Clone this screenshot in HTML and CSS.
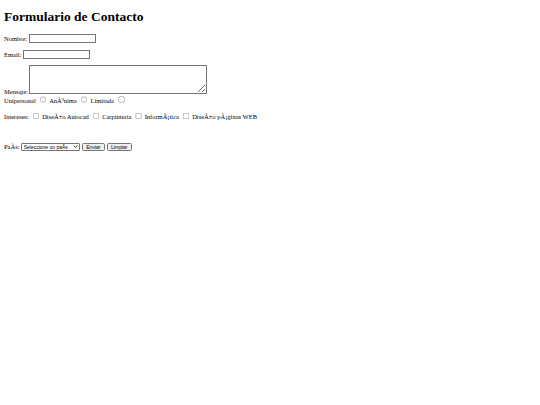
FILE: index.html
```html
<!DOCTYPE html>
<html>
<head>
<meta charset="utf-8">
<title>Formulario de Contacto</title>
<link rel="stylesheet" href="styles.css">
</head>
<body class="page">
<h2 class="title">Formulario de Contacto</h2>
<form class="form">
<p class="row">Nombre: <input type="text" class="field"></p>
<p class="row">Email: <input type="text" class="field"></p>
<p class="row">Mensaje: <textarea class="msg"></textarea><br>
Unipersonal <input type="radio" name="t" class="opt"> AnÃ³nima <input type="radio" name="t" class="opt"> Limitada <input type="radio" name="t" class="opt"></p>
<p class="row row-interests">Intereses: <input type="checkbox" class="opt"> DiseÃ±o Autocad <input type="checkbox" class="opt"> Carpinteria <input type="checkbox" class="opt"> InformÃ¡tica <input type="checkbox" class="opt"> DiseÃ±o pÃ¡ginas WEB</p>
<br>
<p class="row row-country">PaÃ­s: <select class="sel"><option>Seleccione un paÃ­s</option></select> <input type="submit" value="Enviar" class="btn"> <input type="reset" value="Limpiar" class="btn"></p>
</form>
</body>
</html>
```

FILE: styles.css
```css
.page {
  zoom: 0.5;
  margin: 8px;
  font-family: "Liberation Serif", "Times New Roman", serif;
  font-size: 13px;
  background: #fff;
  color: #000;
}
.title {
  font-size: 27px;
  font-weight: bold;
  margin: 10px 0 18px;
}
.row {
  margin: 13px 0;
}
.row-interests {
  margin-top: 15px;
}
.row-country {
  margin-top: 17px;
}
.field {
  font-family: "Liberation Sans", Arial, sans-serif;
  font-size: 11px;
  width: 134px;
  height: 18px;
  box-sizing: border-box;
}
.msg {
  width: 356px;
  height: 57px;
  box-sizing: border-box;
  font-size: 11px;
}
.sel {
  appearance: none;
  -webkit-appearance: none;
  font-family: "Liberation Sans", Arial, sans-serif;
  font-size: 10px;
  width: 118px;
  height: 16px;
  box-sizing: border-box;
  padding: 0 14px 0 3px;
  border: 1px solid #767676;
  border-radius: 2px;
  background: #fff url("data:image/svg+xml,%3Csvg xmlns='http://www.w3.org/2000/svg' width='10' height='6' viewBox='0 0 10 6'%3E%3Cpath d='M1 1l4 4 4-4' fill='none' stroke='%23000' stroke-width='1.6'/%3E%3C/svg%3E") no-repeat right 4px center;
  background-size: 9px 6px;
  color: #000;
}
.btn {
  font-family: "Liberation Sans", Arial, sans-serif;
  font-size: 10px;
  height: 16px;
  padding: 0 7px;
  box-sizing: border-box;
}
```
